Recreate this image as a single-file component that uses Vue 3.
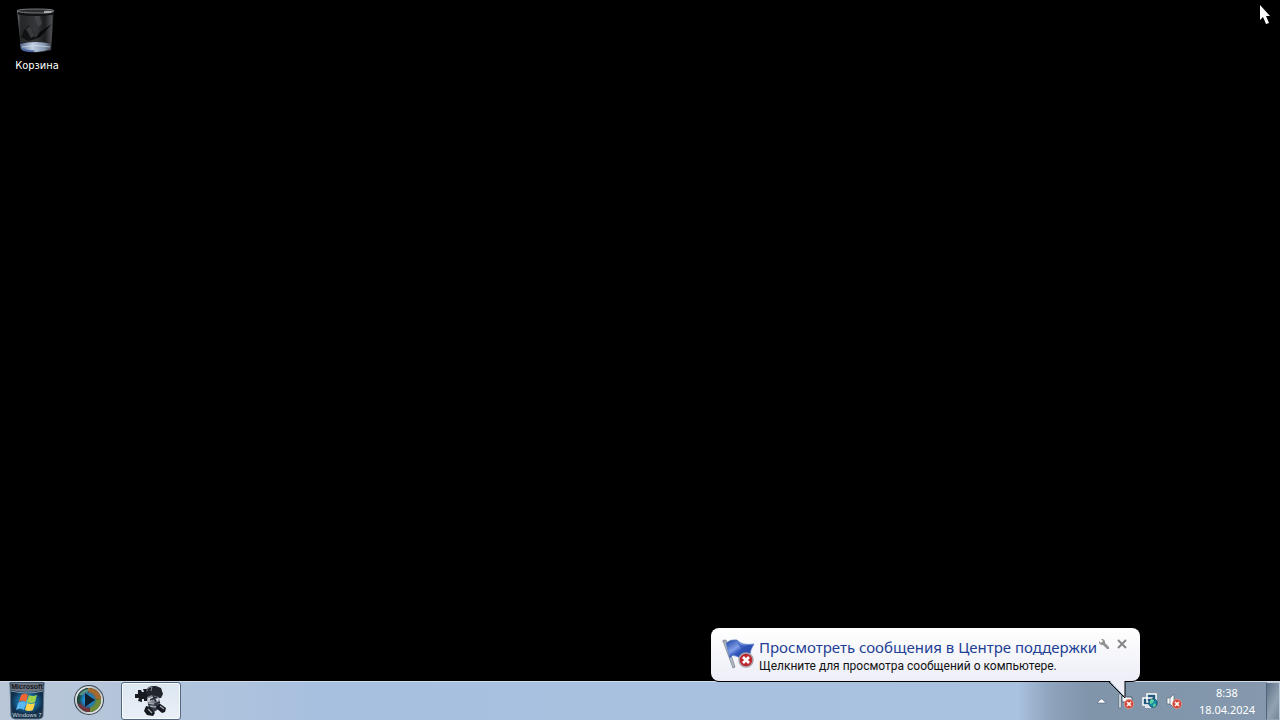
<script setup>
import { ref } from 'vue'

const showBalloon = ref(true)
const time = '8:38'
const date = '18.04.2024'
</script>

<template>
  <div class="desktop">
    <main class="workspace">
      <button class="shortcut" type="button">
        <svg class="bin" viewBox="0 0 40 48" aria-hidden="true">
          <defs>
            <linearGradient id="binGlass" x1="0" x2="1">
              <stop offset="0" stop-color="#77797c" />
              <stop offset=".1" stop-color="#252628" />
              <stop offset=".5" stop-color="#35373a" />
              <stop offset=".75" stop-color="#1c1d1f" />
              <stop offset=".93" stop-color="#4b4d50" />
              <stop offset="1" stop-color="#17181a" />
            </linearGradient>
            <linearGradient id="binBase" x1="0" x2="1">
              <stop offset="0" stop-color="#52678d" />
              <stop offset=".4" stop-color="#c0cfe2" />
              <stop offset=".8" stop-color="#8295ae" />
              <stop offset="1" stop-color="#42474f" />
            </linearGradient>
          </defs>
          <path d="M0 4 L37 4 L34 44 Q19 49 4 44Z" fill="url(#binGlass)" />
          <path d="M3 38 Q19 34 34 38 L34 43 Q19 49 4 43Z" fill="url(#binBase)" />
          <path d="M5 42 Q12 45 18 44 L16 46 Q8 46 5 44Z" fill="#4e67a4" />
          <path d="M7 24 L12 19 L17 27 L19 33 L11 35 L4 31Z" fill="#111214" />
          <path d="M9 23 L13 20 L18 30 L14 32Z M17 9 L22 7 L25 18 L21 21Z" fill="#494b4e" opacity=".7" />
          <path d="M35 18 L23 31 L18 33 L23 26Z" fill="#08090a" />
          <path d="M1 7 Q19 10 37 7" stroke="#101112" stroke-width="3" fill="none" />
          <path d="M0 5 Q0 3 19 3 T37 5 Q29 8 18 7 Q4 7 0 5Z" fill="#2c2e30" stroke="#77797c" stroke-width="1" />
          <path d="M27 5 Q34 4 36 6 Q33 8 27 7Z" fill="#a6a9ac" />
          <path d="M5 41 Q19 38 33 41" stroke="#dce7f3" fill="none" opacity=".6" />
        </svg>
        <span>Корзина</span>
      </button>
    </main>

    <footer class="taskbar">
      <nav class="launchers">
        <button class="launcher start" type="button" aria-label="Пуск">
          <svg class="start-icon" viewBox="0 0 36 38" aria-hidden="true">
            <defs>
              <radialGradient id="startGlow">
                <stop offset="0" stop-color="#45b8e8" />
                <stop offset=".55" stop-color="#176a9d" />
                <stop offset="1" stop-color="#112f4d" />
              </radialGradient>
            </defs>
            <path d="M2 0 H34 Q36 0 35 3 L34 34 Q33 37 30 37 H6 Q3 37 2 34 L1 3 Q0 0 2 0Z" fill="#16314a" stroke="#61788c" />
            <path d="M2 10 Q18 5 34 10 L33 29 Q18 35 3 29Z" fill="url(#startGlow)" />
            <path d="M2 1 H34 V8 Q18 12 2 8Z" fill="#6b7380" />
            <path d="M2 9 Q18 13 34 9" stroke="#9cb0be" fill="none" opacity=".8" />
            <path d="M12 13 Q16 10 19 13 L17 20 Q14 17 10 20Z" fill="#f0642f" />
            <path d="M20 13 Q23 15 28 13 L26 20 Q22 22 18 20Z" fill="#9ed04b" />
            <path d="M9 21 Q13 18 17 21 L15 28 Q12 25 7 28Z" fill="#59b8f2" />
            <path d="M18 21 Q21 23 26 21 L24 28 Q20 30 16 28Z" fill="#ffd34a" />
            <text x="18" y="7" class="badge-top">Microsoft</text>
            <text x="18" y="35" class="badge-bottom">Windows 7</text>
          </svg>
        </button>
        <button class="launcher" type="button" aria-label="Проигрыватель">
          <svg class="player-icon" viewBox="0 0 32 32" aria-hidden="true">
            <defs>
              <linearGradient id="ring" x1="0" y1="0" x2="1" y2="1">
                <stop offset="0" stop-color="#f4f6f6" />
                <stop offset=".45" stop-color="#b0b5b9" />
                <stop offset="1" stop-color="#f0f2f2" />
              </linearGradient>
              <radialGradient id="playDisc">
                <stop offset="0" stop-color="#3fb3ef" />
                <stop offset=".65" stop-color="#187bbb" />
                <stop offset="1" stop-color="#12689f" stop-opacity="0" />
              </radialGradient>
            </defs>
            <circle cx="15" cy="15" r="14" fill="#18232d" stroke="#35424d" stroke-width="2" />
            <circle cx="15" cy="15" r="13" fill="none" stroke="url(#ring)" stroke-width="2" />
            <path d="M15 15 L4 19 A12 12 0 0 1 14 3Z" fill="#1c4a3c" />
            <path d="M15 15 L14 3 A12 12 0 0 1 27 14Z" fill="#a56a2e" />
            <path d="M15 15 L27 14 A12 12 0 0 1 16 27Z" fill="#6f8b37" />
            <path d="M15 15 L16 27 A12 12 0 0 1 4 19Z" fill="#74343b" />
            <path d="M5 10 Q9 4 15 4 L12 11Z" fill="#8bb8b1" opacity=".65" />
            <circle cx="14" cy="15" r="9" fill="url(#playDisc)" />
            <path d="M11 8 L21 15 L11 22Z" fill="#111d2a" />
          </svg>
        </button>
        <button class="launcher active" type="button" aria-label="Установка">
          <svg class="puzzle-icon" viewBox="0 0 34 32" aria-hidden="true">
            <path d="M1 9 L4 9 L4 5 L7 5 L8 7 L10 7 L9 4 L13 4 L13 7 L15 8 L14 10 L17 11 L15 14 L13 13 L13 16 L10 16 L10 14 L8 14 L8 17 L4 16 L5 13 L1 13Z" fill="#171a20" />
            <path d="M12 6 Q13 1 20 1 L22 1 L27 3 L29 9 L27 13 L20 13 L13 10Z" fill="#22252c" />
            <path d="M13 6 Q13 2 18 2 L17 6" stroke="#858b93" fill="none" />
            <path d="M13 12 L18 10 L25 12 L26 17 L21 22 L14 20Z" fill="#7b838d" />
            <path d="M14 13 L19 12 L18 16 L14 17Z M21 14 L25 13 L24 17Z" fill="#d1d6dc" />
            <path d="M19 10 L22 17 M16 15 L23 12 M21 19 L26 17" stroke="#272b32" stroke-width="1.5" />
            <path d="M14 19 L23 18 L26 23 L20 27 L15 24Z" fill="#353b45" />
            <path d="M12 21 L16 22 L21 28 L19 31 L13 30 L10 26Z M25 18 L32 23 L31 27 L28 28 L22 23Z" fill="#15191f" />
            <path d="M15 18 L20 19 M16 21 L22 22 M14 24 L18 28 M26 21 L30 24" stroke="#a0a6ae" stroke-width="1.3" />
          </svg>
        </button>
      </nav>

      <section class="tray" aria-label="Область уведомлений">
        <button class="tray-button" type="button" aria-label="Показать скрытые значки">
          <svg viewBox="0 0 16 16"><path d="M3 10 L7 6 L8 6 L12 10Z" fill="#fff" stroke="#53677b" stroke-width=".6" /></svg>
        </button>
        <button class="tray-button" type="button" aria-label="Центр поддержки" @click="showBalloon = true">
          <svg viewBox="0 0 16 16">
            <path d="M1 1 H3 V15 H1Z" fill="#fff" stroke="#425669" stroke-width=".6" />
            <path d="M4 3 Q7 1 9 4 L14 4 V9 H4Z" fill="#f6f8fb" stroke="#4e6173" />
            <circle cx="11" cy="11" r="4.7" fill="#d44538" stroke="#edada0" stroke-width=".6" />
            <path d="M9 9 L13 13 M13 9 L9 13" stroke="#fff" stroke-width="1.6" />
          </svg>
        </button>
        <button class="tray-button" type="button" aria-label="Сеть">
          <svg viewBox="0 0 16 16">
            <path d="M5 1 H14 V9 H5Z M1 5 H10 V12 H1Z M3 14 H9" fill="#22577c" stroke="#fff" stroke-width="1.5" />
            <circle cx="11" cy="10" r="4.2" fill="#168aa5" stroke="#174b75" />
            <path d="M9 6 L12 7 L11 10 L8 11 L8 8Z M13 10 L14 13 L11 14 L11 12Z" fill="#62d2a0" />
          </svg>
        </button>
        <button class="tray-button" type="button" aria-label="Звук отключён">
          <svg viewBox="0 0 16 16">
            <path d="M1 5 H4 L8 1 V15 L4 11 H1Z" fill="#f8fafb" stroke="#60717e" stroke-width=".8" />
            <path d="M4 5 V11" stroke="#8796a2" />
            <circle cx="11" cy="11" r="4.7" fill="#d44538" stroke="#edada0" stroke-width=".6" />
            <path d="M9 9 L13 13 M13 9 L9 13" stroke="#fff" stroke-width="1.6" />
          </svg>
        </button>
        <button class="clock" type="button"><time>{{ time }}</time><span>{{ date }}</span></button>
        <button class="show-desktop" type="button" aria-label="Свернуть все окна"></button>
      </section>
    </footer>

    <aside v-if="showBalloon" class="balloon" role="status">
      <svg class="flag" viewBox="0 0 34 34" aria-hidden="true">
        <defs>
          <linearGradient id="flagBlue" x1="0" y1="0" x2="1" y2="1">
            <stop offset="0" stop-color="#183e9b" />
            <stop offset=".4" stop-color="#829fea" />
            <stop offset=".55" stop-color="#3158bd" />
            <stop offset="1" stop-color="#193784" />
          </linearGradient>
        </defs>
        <path d="M1 3 L4 2 L13 29 L11 30Z" fill="#b9bfc7" stroke="#697582" stroke-width=".7" />
        <circle cx="2" cy="3" r="1.5" fill="#9099a4" />
        <path d="M4 5 Q9 1 15 2 Q20 8 32 6 Q28 12 28 17 Q20 22 14 18 Q10 16 8 20Z" fill="url(#flagBlue)" stroke="#5375c7" stroke-width=".7" />
        <path d="M15 4 Q21 9 30 8 L27 15 Q21 16 15 4Z" fill="#2b50b0" opacity=".6" />
        <circle cx="24" cy="22" r="7" fill="#bd2730" stroke="#a8a4a9" stroke-width="1.5" />
        <path d="M21 19 L27 25 M27 19 L21 25" stroke="#fff" stroke-width="2.7" />
      </svg>
      <div class="message">
        <h1>Просмотреть сообщения в Центре поддержки</h1>
        <p>Щелкните для просмотра сообщений о компьютере.</p>
      </div>
      <button class="balloon-button" type="button" aria-label="Настроить">
        <svg viewBox="0 0 12 12"><path d="M3 1 H5 L7 3 V5 L11 9 V11 H9 L5 7 H3 L1 5 V3 L3 5 L5 3Z" fill="#929292" /></svg>
      </button>
      <button class="balloon-button close" type="button" aria-label="Закрыть" @click="showBalloon = false">
        <svg viewBox="0 0 12 12"><path d="M2 2 L10 10 M10 2 L2 10" stroke="#858585" stroke-width="2" /></svg>
      </button>
      <svg class="tail" viewBox="0 0 22 22" aria-hidden="true">
        <path d="M1 0 L17 17 V0Z" fill="#eeeff8" /><path d="M0 1 L17 18 V1" fill="none" stroke="#000" />
      </svg>
    </aside>

    <svg class="cursor" viewBox="0 0 12 20" aria-hidden="true">
      <path d="M0 0 V15 L3 12 L6 19 L9 18 L6 11 H10Z" fill="#fff" />
    </svg>
  </div>
</template>

<style>
body { margin: 0; background: #000; }
</style>

<style scoped>
.desktop { position: relative; display: flex; flex-direction: column; min-height: 100vh; overflow: hidden; background: #000; font-family: "Noto Sans", "Open Sans", sans-serif; }
button { padding: 0; border: 0; background: transparent; font: inherit; color: inherit; }
svg { display: block; }
.workspace { flex: 1; padding: 6px 0; }
.shortcut { display: flex; flex-direction: column; align-items: center; width: 74px; gap: 4px; color: #fff; font: 11px/16px "DejaVu Sans Condensed", "Noto Sans", sans-serif; }
.bin { width: 40px; height: 48px; }
.taskbar { display: flex; justify-content: space-between; height: 38px; border-top: 1px solid #d1dce8; background: linear-gradient(90deg, #b9c7d8 0, #b4c5db 10%, #a7c0df 25%, #a9c2e0 79.5%, #8fa4bd 82%, #8095aa 85%, #8598ad 100%); }
.launchers { display: flex; }
.launcher { display: flex; align-items: center; justify-content: center; box-sizing: border-box; width: 60px; }
.start { width: 54px; margin-right: 6px; }
.launcher.active { width: 60px; margin-left: 1px; border: 1px solid #53687f; border-radius: 3px; background: linear-gradient(#dce7f2, #e9eff6); box-shadow: inset 0 0 0 1px #f7faff; }
.start-icon { width: 36px; height: 38px; }
.badge-top, .badge-bottom { fill: #cbd7df; font: 7px "Liberation Sans", sans-serif; text-anchor: middle; }
.badge-top { fill: #10141b; font-weight: 700; }
.badge-bottom { font-size: 6px; }
.player-icon { width: 32px; height: 32px; }
.puzzle-icon { width: 34px; height: 32px; }
.tray { display: flex; align-items: center; color: #fff; }
.tray-button { display: flex; align-items: center; justify-content: center; width: 24px; }
.tray-button svg { width: 16px; height: 16px; }
.clock { display: flex; flex-direction: column; width: 68px; margin-left: 7px; align-items: center; font-size: 11px; line-height: 17px; }
.show-desktop { align-self: stretch; box-sizing: border-box; width: 14px; margin-left: 5px; border: 1px solid #bdcbd8; border-left-color: #50657a; border-bottom-color: #92a2b2; background: linear-gradient(115deg, #5f7387, #91a2b3 60%, #74889b); }
.balloon { position: absolute; right: 140px; bottom: 39px; display: flex; box-sizing: border-box; width: 429px; height: 53px; padding: 10px 11px; border-radius: 8px; background: linear-gradient(#fff, #edeef7); box-shadow: 0 1px #000; }
.flag { flex: none; width: 34px; height: 34px; }
.message { width: 339px; margin-left: 3px; white-space: nowrap; }
h1, p { margin: 0; font-weight: 400; }
h1 { color: #223f94; font-size: 15px; line-height: 19px; }
p { color: #111; font: 12px/19px Roboto, "Noto Sans", sans-serif; }
.balloon-button { width: 12px; height: 12px; }
.balloon-button svg { width: 12px; height: 12px; }
.close { margin-left: 6px; }
.tail { position: absolute; right: 10px; top: 52px; width: 22px; height: 22px; }
.cursor { position: absolute; top: 5px; right: 8px; width: 12px; height: 20px; }
</style>
